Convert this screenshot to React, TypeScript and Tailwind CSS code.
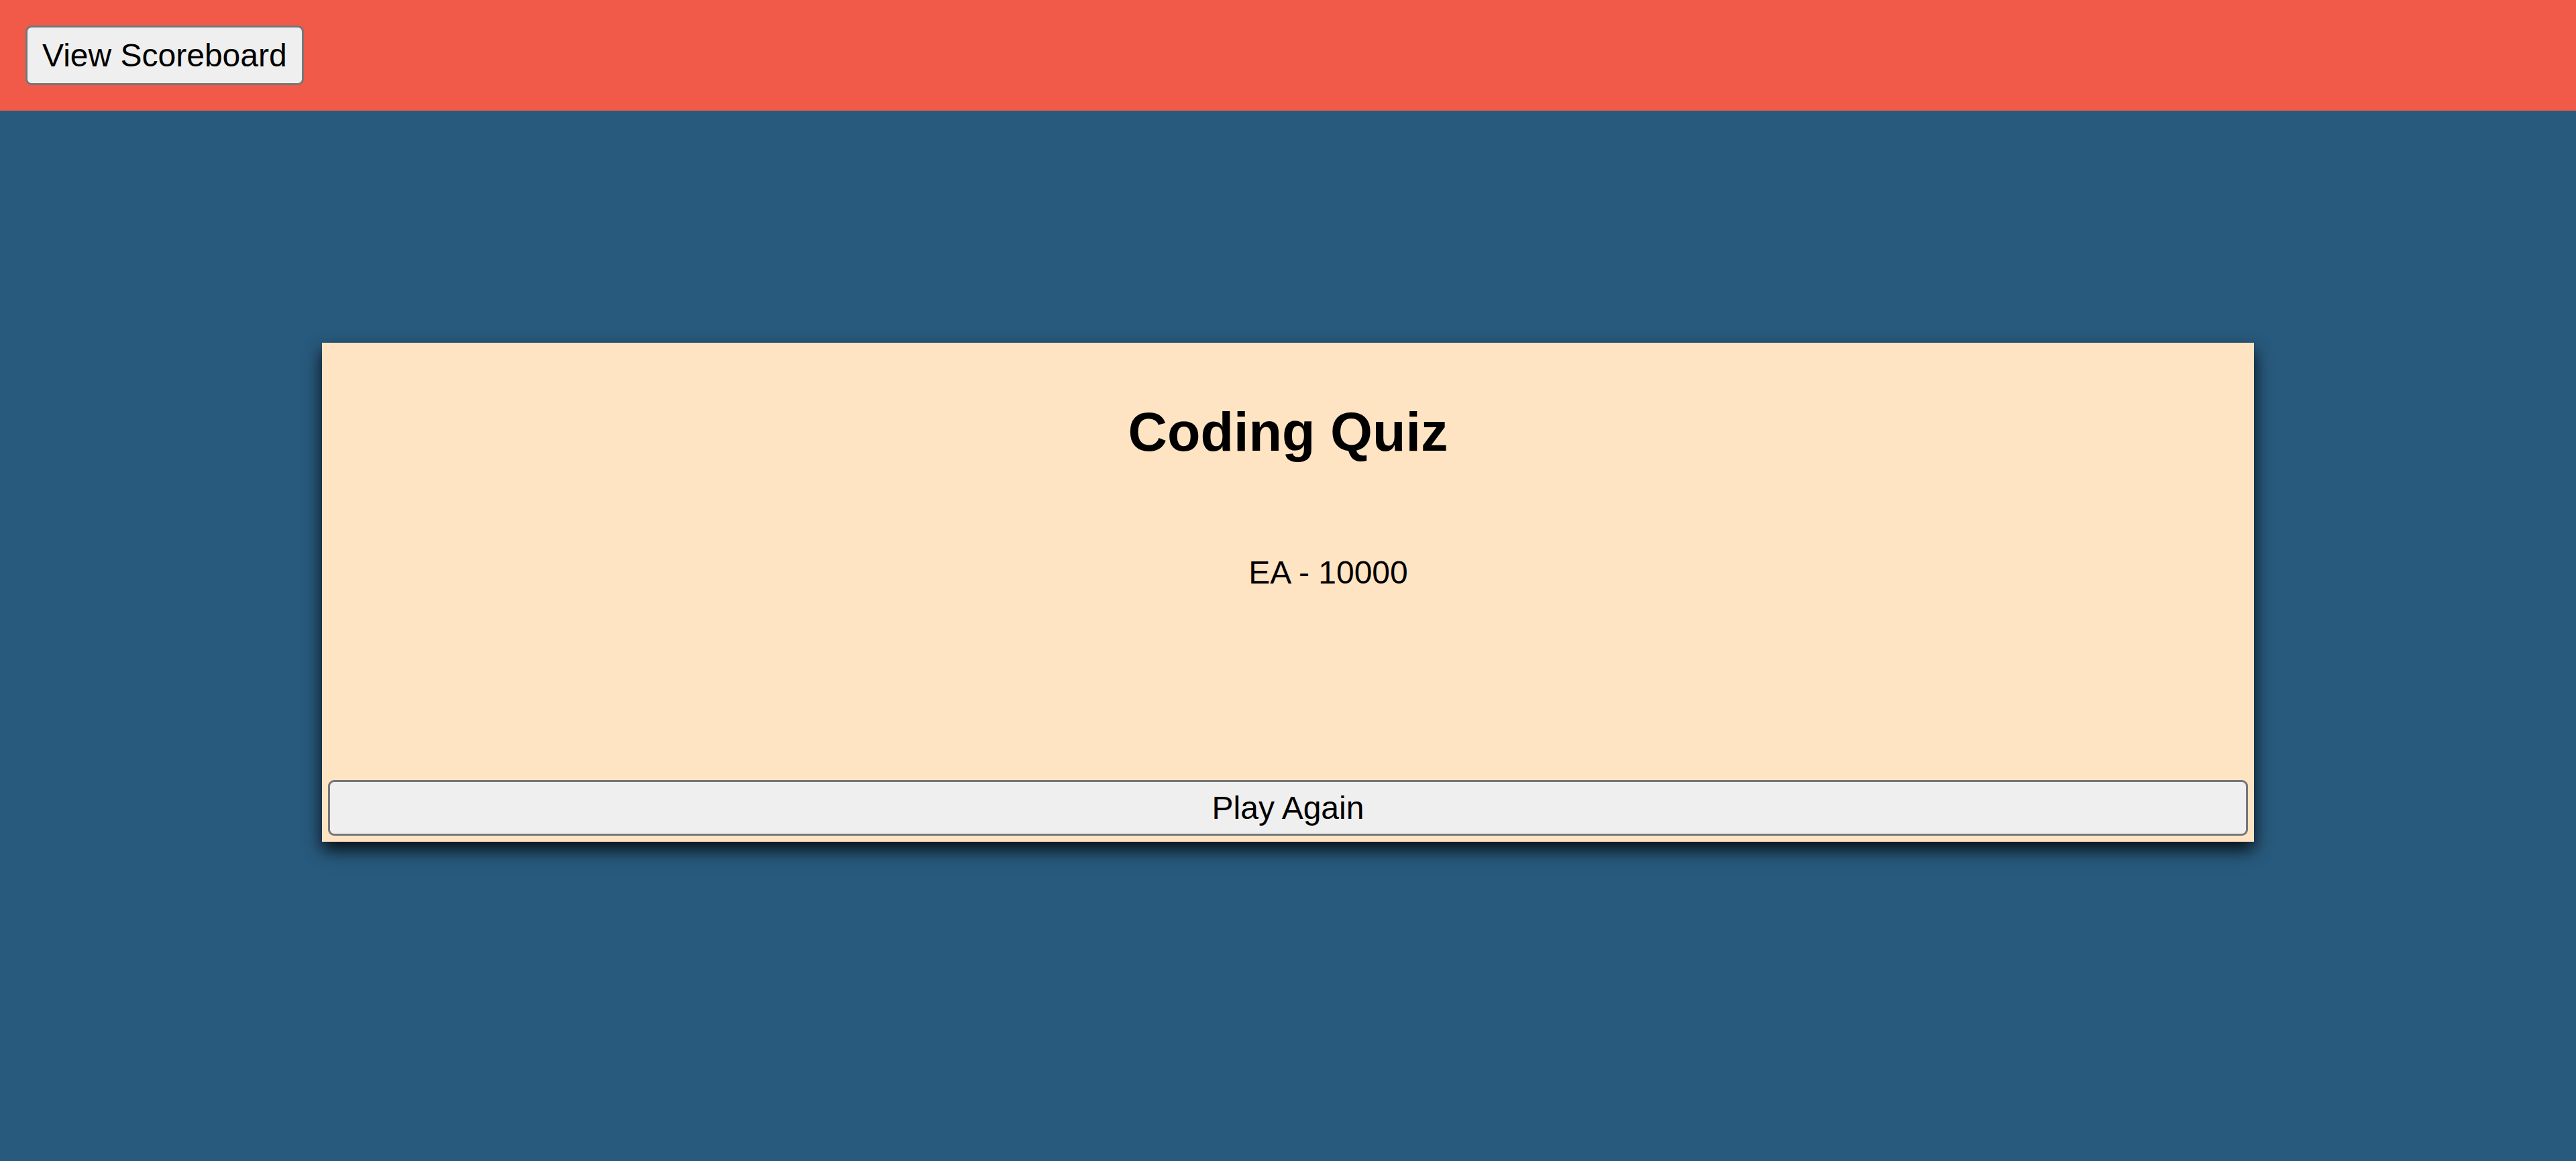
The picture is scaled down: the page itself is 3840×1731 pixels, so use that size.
export default function App() {
  return (
    <div className="min-h-screen bg-[#285a7d] font-['Liberation_Sans',Arial,sans-serif] text-black">
      <header className="bg-[#f15a48] p-[38px]">
        <button className="rounded-[9px] border-[3px] border-[#767676] bg-[#efefef] px-[22px] py-[14px] text-[48px] leading-[55px]">
          View Scoreboard
        </button>
      </header>

      <main className="flex justify-center pt-[346px]">
        <div className="flex h-[744px] w-[2880px] flex-col bg-[#ffe4c4] shadow-[0_12px_24px_0_rgba(0,0,0,0.85)]">
          <h1 className="mt-[87px] text-center text-[81px] font-bold leading-[92px]">Coding Quiz</h1>
          <ul className="mt-[136px] pl-[120px] text-center text-[48px] leading-[55px]">
            <li>EA - 10000</li>
          </ul>
          <button className="mx-[9px] mb-[9px] mt-auto rounded-[9px] border-[3px] border-[#767676] bg-[#efefef] py-[11px] text-[48px] leading-[55px]">
            Play Again
          </button>
        </div>
      </main>
    </div>
  );
}
